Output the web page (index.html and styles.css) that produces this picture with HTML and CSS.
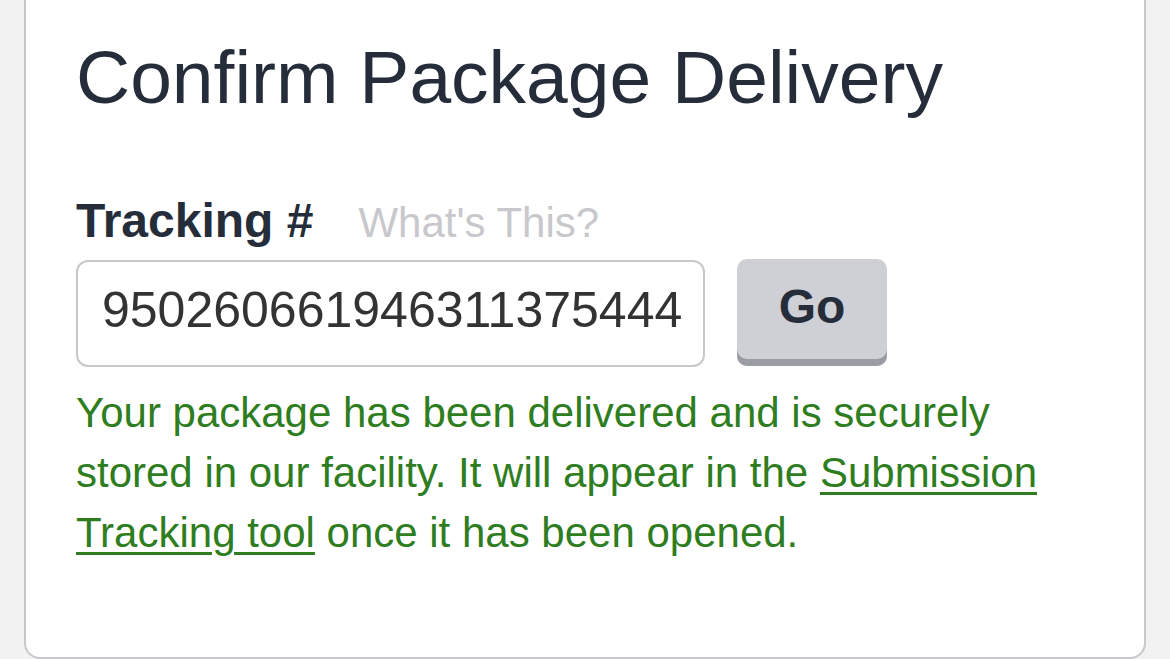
FILE: index.html
```html
<!DOCTYPE html>
<html>
<head>
<meta charset="utf-8">
<link rel="stylesheet" href="styles.css">
</head>
<body>
<div class="card">
  <h1 class="title">Confirm Package Delivery</h1>
  <div class="label-row">
    <span class="label">Tracking #</span>
    <span class="help">What's This?</span>
  </div>
  <div class="input-row">
    <div class="input"><span class="value">950260661946311375444</span></div>
    <button class="go">Go</button>
  </div>
  <p class="msg">Your package has been delivered and is securely stored in our facility. It will appear in the <a href="#" class="link">Submission Tracking tool</a> once it has been opened.</p>
</div>
</body>
</html>
```

FILE: styles.css
```css
html, body {
  margin: 0;
  padding: 0;
  background: #f2f2f2;
  height: 659px;
  overflow: hidden;
  font-family: "Liberation Sans", Arial, sans-serif;
}
.card {
  box-sizing: border-box;
  margin: -20px 0 0 24px;
  width: 1122px;
  height: 679px;
  background: #fff;
  border: 2px solid #c8c8cc;
  border-radius: 16px;
  padding: 50px 50px 0 50px;
}
.title {
  margin: 0;
  font-weight: normal;
  font-size: 75px;
  line-height: 90px;
  color: #262d3a;
}
.label-row {
  margin-top: 71px;
  display: flex;
  align-items: baseline;
  gap: 45px;
  height: 56px;
  line-height: 56px;
}
.label {
  font-weight: bold;
  font-size: 48px;
  color: #262d3a;
}
.help {
  font-size: 42px;
  color: #c8c8cc;
}
.input-row {
  display: flex;
  gap: 32px;
  margin-top: 11px;
}
.input {
  box-sizing: border-box;
  width: 629px;
  height: 107px;
  border: 2px solid #c8c8cc;
  border-radius: 12px;
  padding: 0 22px 6px 24px;
}
.value {
  display: block;
  overflow: hidden;
  white-space: nowrap;
  font-size: 50px;
  line-height: 97px;
  color: #333;
}
.go {
  box-sizing: border-box;
  width: 150px;
  height: 107px;
  margin-top: -1px;
  border: none;
  border-radius: 10px;
  background: #cfd0d5;
  box-shadow: inset 0 -7px 0 #9b9ca4;
  font-family: inherit;
  font-weight: bold;
  font-size: 48px;
  color: #262d3a;
  padding: 0 0 12px 0;
}
.msg {
  margin: 16px 0 0 0;
  width: 985px;
  font-size: 42px;
  line-height: 60px;
  color: #2e7d20;
}
.link {
  color: #2e7d20;
  text-decoration: underline;
  text-underline-offset: 5px;
  text-decoration-thickness: 3px;
}
```
